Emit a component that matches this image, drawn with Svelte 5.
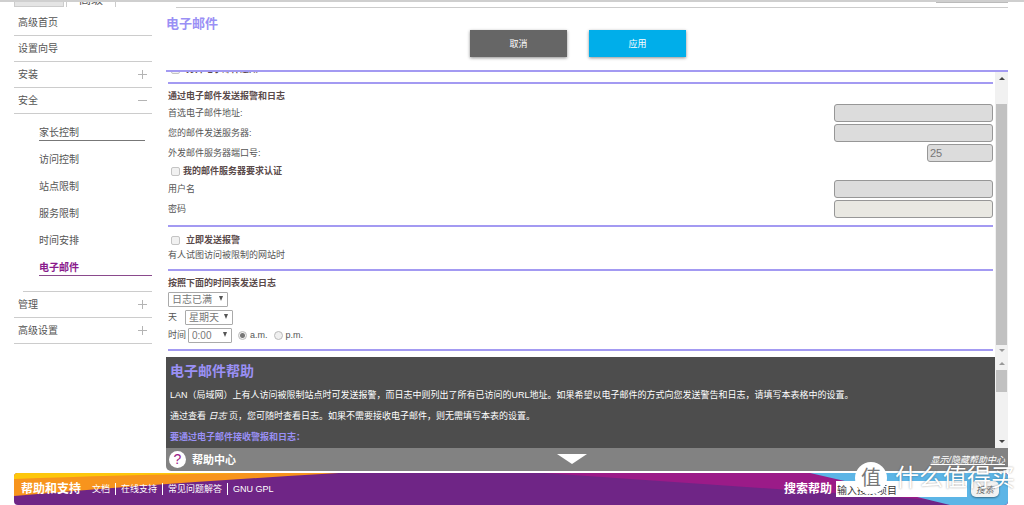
<!--
  EmailSettings: router admin page for e-mail alerts and log delivery,
	with side navigation, a docked help pane and the support footer.
-->
<script lang="ts">
	type NavItem = { label: string; mark?: string };

	const topItems: NavItem[] = [
		{ label: '高级首页' },
		{ label: '设置向导' },
		{ label: '安装', mark: '+' },
		{ label: '安全', mark: '-' }
	];
	const subItems = ['家长控制', '访问控制', '站点限制', '服务限制', '时间安排', '电子邮件'];
	const bottomItems: NavItem[] = [
		{ label: '管理', mark: '+' },
		{ label: '高级设置', mark: '+' }
	];
	const supportLinks = ['文档', '在线支持', '常见问题解答', 'GNU GPL'];

	let active = $state('电子邮件');
	let period = $state('am');
	let query = $state('输入搜索项目');
</script>

{#snippet navRow(item: NavItem)}
	<a class="nav-item" href="#nav">
		<span>{item.label}</span>
		{#if item.mark}
			<svg class="mark" viewBox="0 0 9 9" aria-hidden="true">
				<path d={item.mark === '+' ? 'M0 4.5H9M4.5 0V9' : 'M0 4.5H9'} />
			</svg>
		{/if}
	</a>
{/snippet}

<div class="page">
	<div class="tabs">
		<span class="tab tab-idle"></span>
		<span class="tab tab-current"><span>高级</span></span>
		<span class="tab-line"><span class="tab-end"></span></span>
	</div>

	<div class="layout">
		<nav>
			{#each topItems as item}
				{@render navRow(item)}
			{/each}
			<div class="sub">
				{#each subItems as label, i}
					<a
						href="#sub"
						class="sub-item"
						class:hovered={i === 0}
						class:active={label === active}
						onclick={() => (active = label)}>{label}</a
					>
				{/each}
			</div>
			{#each bottomItems as item}
				{@render navRow(item)}
			{/each}
		</nav>

		<main>
			<header>
				<h1>电子邮件</h1>
				<div class="actions">
					<button type="button" class="cancel">取消</button>
					<button type="button" class="apply">应用</button>
				</div>
			</header>

			<div class="pane">
				<form class="form">
					<label class="check-row notify"><input type="checkbox" disabled />打开电子邮件通知</label>
					<hr />
					<h2>通过电子邮件发送报警和日志</h2>
					<div class="field">
						<label for="mail-to">首选电子邮件地址:</label>
						<input id="mail-to" type="text" disabled />
					</div>
					<div class="field">
						<label for="mail-server">您的邮件发送服务器:</label>
						<input id="mail-server" type="text" disabled />
					</div>
					<div class="field">
						<label for="mail-port">外发邮件服务器端口号:</label>
						<input id="mail-port" class="port" type="text" value="25" disabled />
					</div>
					<label class="check-row"><input type="checkbox" disabled />我的邮件服务器要求认证</label>
					<div class="field">
						<label for="mail-user">用户名</label>
						<input id="mail-user" type="text" disabled />
					</div>
					<div class="field">
						<label for="mail-pass">密码</label>
						<input id="mail-pass" class="pass" type="password" disabled />
					</div>
					<hr />
					<label class="check-row alert"><input type="checkbox" disabled />立即发送报警</label>
					<p class="note">有人试图访问被限制的网站时</p>
					<hr />
					<h2>按照下面的时间表发送日志</h2>
					<div class="schedule">
						<span class="select">
							<select aria-label="发送时间" disabled><option>日志已满</option></select>
						</span>
					</div>
					<div class="schedule day">
						<label for="day">天</label>
						<span class="select short">
							<select id="day" disabled><option>星期天</option></select>
						</span>
					</div>
					<div class="schedule">
						<label for="time">时间</label>
						<span class="select narrow">
							<select id="time" disabled><option>0:00</option></select>
						</span>
						<label class="radio">
							<input type="radio" bind:group={period} value="am" disabled />a.m.
						</label>
						<label class="radio"><input type="radio" bind:group={period} value="pm" disabled />p.m.</label>
					</div>
					<hr class="last" />
				</form>
				<div class="scrollbar" aria-hidden="true">
					<svg viewBox="0 0 6 3"><path d="M0 3L3 0L6 3Z" /></svg>
					<span class="thumb"></span>
					<svg class="faded" viewBox="0 0 6 3"><path d="M0 0L3 3L6 0Z" /></svg>
				</div>
			</div>

			<section class="help">
				<div class="help-text">
					<h2>电子邮件帮助</h2>
					<p>LAN（局域网）上有人访问被限制站点时可发送报警，而日志中则列出了所有已访问的URL地址。如果希望以电子邮件的方式向您发送警告和日志，请填写本表格中的设置。</p>
					<p>通过查看 <em>日志</em> 页，您可随时查看日志。如果不需要接收电子邮件，则无需填写本表的设置。</p>
					<h3>要通过电子邮件接收警报和日志：</h3>
				</div>
				<div class="scrollbar help-scroll" aria-hidden="true">
					<svg class="faded" viewBox="0 0 6 3"><path d="M0 3L3 0L6 3Z" /></svg>
					<span class="thumb"></span>
					<svg viewBox="0 0 6 3"><path d="M0 0L3 3L6 0Z" /></svg>
				</div>
			</section>
			<div class="help-bar">
				<span class="question">?</span>
				<strong>帮助中心</strong>
				<svg class="arrow" viewBox="0 0 30 10" aria-hidden="true"><path d="M0 0H30L15 10Z" /></svg>
				<a href="#help">显示/隐藏帮助中心</a>
			</div>
		</main>
	</div>

	<footer>
		<svg class="waves" viewBox="0 0 994 32" preserveAspectRatio="none" aria-hidden="true">
			<path fill="#6f2586" d="M0 0H994V32H0Z" />
			<path fill="#f7941d" d="M0 0H325Q150 10 0 23Z" />
			<path fill="#fdc70c" d="M0 0H230Q100 2 0 6Z" />
			<path fill="#9b1b88" d="M530 0H994V32Q760 16 530 0Z" />
			<path fill="#5cb5e6" d="M796 0H994V32H936L899 23Q860 15 822 6Z" />
		</svg>
		<strong>帮助和支持</strong>
		<ul>
			{#each supportLinks as link}
				<li><a href="#support">{link}</a></li>
			{/each}
		</ul>
		<form class="search">
			<label for="search">搜索帮助</label>
			<input id="search" type="text" bind:value={query} />
			<button type="button">搜索</button>
		</form>
		<div class="watermark">
			<span class="badge">值</span>
			<span>什么值得买</span>
		</div>
	</footer>
</div>

<style>
	:global(body) {
		background: #fff;
	}

	.page {
		font-family: 'Liberation Sans', 'Noto Sans CJK SC', sans-serif;
		font-size: 9px;
		line-height: 14px;
		color: #555;
		border-bottom: 1px solid #888;
	}

	a {
		color: inherit;
		text-decoration: none;
	}

	h1,
	h2,
	h3,
	p,
	ul {
		margin: 0;
		padding: 0;
	}

	button,
	input,
	select {
		font-family: inherit;
		margin: 0;
		box-sizing: border-box;
	}

	/* Lower edge of the tab strip */
	.tabs {
		display: flex;
		height: 6px;
		padding: 0 16px 0 14px;
		border-top: 2px solid #cfcfcf;
	}

	.tab {
		width: 48px;
		height: 5px;
		border: 1px solid #ccc;
		border-top: 0;
		overflow: hidden;
	}

	.tab-idle {
		background: #e4e4e4;
		margin-right: 2px;
		height: 4px;
	}

	.tab-current {
		border-bottom: 0;
		display: flex;
		align-items: flex-end;
		justify-content: center;
		font-size: 12px;
		line-height: 14px;
	}

	.tab-line {
		flex: 1;
		margin-left: 60px;
		border-bottom: 1px solid #ccc;
		display: flex;
		justify-content: flex-end;
		align-items: flex-start;
	}

	.tab-end {
		width: 72px;
		height: 1px;
		background: #bbb;
	}

	.layout {
		display: grid;
		grid-template-columns: 138px minmax(0, 1fr);
		gap: 14px;
		padding: 0 16px 2px 14px;
	}

	nav {
		padding-top: 2px;
		font-size: 10px;
	}

	.nav-item {
		display: flex;
		align-items: center;
		justify-content: space-between;
		height: 25px;
		padding: 0 5px 0 4px;
		border-bottom: 1px solid #ccc;
	}

	.mark {
		width: 9px;
		height: 9px;
		stroke: #b4b4b4;
	}

	.sub {
		display: flex;
		flex-direction: column;
		gap: 7px;
		margin-left: 9px;
		padding: 7px 0 15px 16px;
		border-bottom: 1px solid #ccc;
	}

	.sub-item {
		height: 14px;
		padding-top: 5px;
		border-bottom: 1px solid transparent;
	}

	.hovered {
		margin-right: 7px;
		border-color: #777;
	}

	.active {
		color: #8a1a8c;
		font-weight: bold;
		border-color: #8a4a8c;
	}

	header {
		display: flex;
		height: 62px;
		border-bottom: 2px solid #a39af2;
	}

	h1 {
		width: 120px;
		padding-top: 8px;
		font-size: 13px;
		line-height: 16px;
		color: #9a90f5;
	}

	.actions {
		flex: 1;
		display: flex;
		justify-content: center;
		gap: 22px;
		padding: 22px 138px 0 0;
	}

	.actions button {
		width: 97px;
		height: 27px;
		padding: 0;
		border: 0;
		color: #fff;
		font-size: 9px;
		box-shadow: 0 1px 3px rgba(0, 0, 0, 0.45);
	}

	.actions .cancel {
		background: #666;
	}

	.actions .apply {
		background: #00aeea;
	}

	.pane {
		display: flex;
		overflow: hidden;
	}

	.form {
		flex: 1;
		padding: 0 2px 6px;
	}

	hr {
		height: 2px;
		margin: 6px 0 5px;
		border: 0;
		background: #a39af2;
	}

	.last {
		margin: 5px 0 0;
	}

	.form h2 {
		font-size: 9px;
		line-height: 14px;
		font-weight: bold;
		color: #5a4a4a;
	}

	.check-row {
		display: flex;
		align-items: center;
		gap: 3px;
		height: 16px;
		padding-left: 3px;
		font-weight: bold;
		color: #5a4a4a;
	}

	.check-row input {
		appearance: none;
		width: 9px;
		height: 9px;
		border: 1px solid #c4c4c4;
		border-radius: 2px;
		background: #f1f1f1;
	}

	/* Scrolled partly under the header rule */
	.notify {
		height: 14px;
		margin-top: -10px;
	}

	.notify,
	.alert {
		gap: 6px;
	}

	.note {
		line-height: 15px;
	}

	.field {
		display: flex;
		align-items: center;
		justify-content: space-between;
		height: 20px;
	}

	.field input {
		width: 159px;
		height: 18px;
		padding: 0 2px;
		border: 1px solid #979797;
		border-radius: 3px;
		background: #dcdcdc;
		font-size: 11px;
		color: #777;
	}

	.field .port {
		width: 66px;
	}

	.field .pass {
		background: #e9e8e2;
	}

	.schedule {
		display: flex;
		align-items: center;
		gap: 2px;
		height: 18px;
	}

	.day {
		gap: 8px;
	}

	.select {
		position: relative;
		display: flex;
		width: 60px;
	}

	.select::after {
		content: '';
		position: absolute;
		right: 5px;
		top: 4px;
		border: solid transparent;
		border-width: 5px 2px 0;
		border-top-color: #555;
	}

	.short {
		width: 48px;
	}

	.narrow {
		width: 44px;
	}

	select {
		appearance: none;
		width: 100%;
		height: 15px;
		padding: 0 3px;
		border: 1px solid #aaa;
		border-radius: 1px;
		background: #fff;
		font-size: 10px;
		line-height: 13px;
		color: #777;
		opacity: 1;
	}

	.radio {
		display: flex;
		align-items: center;
		gap: 3px;
		margin-left: 4px;
	}

	.radio input {
		appearance: none;
		width: 9px;
		height: 9px;
		border: 1px solid #bbb;
		border-radius: 50%;
		background: #f0f0f0;
	}

	.radio input:checked {
		background: radial-gradient(#777 0 2px, #f0f0f0 3px);
	}

	.scrollbar {
		display: flex;
		flex-direction: column;
		align-items: center;
		width: 13px;
		padding: 5px 0;
		box-sizing: border-box;
		background: #f1f1f1;
	}

	.scrollbar svg {
		width: 6px;
		height: 3px;
		fill: #444;
	}

	.scrollbar .faded {
		fill: #999;
	}

	.thumb {
		flex: 1;
		width: 11px;
		margin: 24px 0 4px;
		background: #c1c1c1;
	}

	.help {
		display: flex;
		background: #4d4d4d;
		color: #fff;
	}

	.help-text {
		flex: 1;
		padding: 6px 4px 0;
		line-height: 21px;
	}

	.help h2 {
		margin-bottom: 6px;
		font-size: 14px;
		line-height: 16px;
		color: #9a90f5;
	}

	.help h3 {
		font-size: 9px;
		color: #9a90f5;
	}

	.help-scroll .thumb {
		flex: none;
		height: 22px;
		margin: 5px 0 auto;
	}

	.help-bar {
		position: relative;
		display: flex;
		align-items: center;
		gap: 6px;
		height: 23px;
		padding: 0 3px;
		background: #828282;
		border-radius: 0 0 5px 5px;
		color: #fff;
	}

	.question {
		width: 17px;
		height: 17px;
		border-radius: 50%;
		background: #fff;
		color: #9b1b88;
		font-size: 14px;
		line-height: 17px;
		text-align: center;
	}

	.help-bar strong {
		font-size: 11px;
	}

	.arrow {
		position: absolute;
		left: calc(50% - 30px);
		top: 6px;
		width: 30px;
		height: 10px;
		fill: #fff;
	}

	.help-bar a {
		margin-left: auto;
		font-style: italic;
		text-decoration: underline;
	}

	footer {
		position: relative;
		display: flex;
		align-items: center;
		height: 32px;
		margin: 0 16px 0 14px;
		padding: 0 9px 0 7px;
		box-sizing: border-box;
		color: #fff;
	}

	.waves {
		position: absolute;
		inset: 0;
		width: 100%;
		height: 100%;
		border-radius: 4px;
	}

	footer strong,
	ul,
	.search {
		position: relative;
	}

	footer strong,
	.search label {
		font-size: 12px;
		font-weight: bold;
	}

	ul {
		display: flex;
		margin-left: 6px;
		list-style: none;
	}

	li {
		padding: 0 5px;
		line-height: 12px;
	}

	li + li {
		border-left: 1px solid #fff;
	}

	.search {
		display: flex;
		align-items: center;
		margin-left: auto;
	}

	.search input {
		width: 131px;
		height: 16px;
		margin: 0 4px;
		padding: 0 1px;
		border: 0;
		background: #fff;
		font-size: 10px;
		color: #333;
	}

	.search button {
		width: 28px;
		height: 16px;
		padding: 0;
		border: 0;
		border-radius: 5px;
		background: #f2f2f2;
		box-shadow: 0 1px 2px rgba(0, 0, 0, 0.4);
		font-size: 9px;
		font-style: italic;
		color: #666;
	}

	.watermark {
		position: absolute;
		right: -7px;
		bottom: 11px;
		display: flex;
		align-items: center;
		gap: 8px;
		font-size: 24px;
		line-height: 32px;
		color: #fff;
		text-shadow: 0 0 2px rgba(0, 0, 0, 0.4);
		pointer-events: none;
	}

	.badge {
		width: 32px;
		height: 32px;
		border-radius: 50%;
		background: #fff;
		color: #777;
		font-size: 20px;
		text-align: center;
		text-shadow: none;
	}
</style>
